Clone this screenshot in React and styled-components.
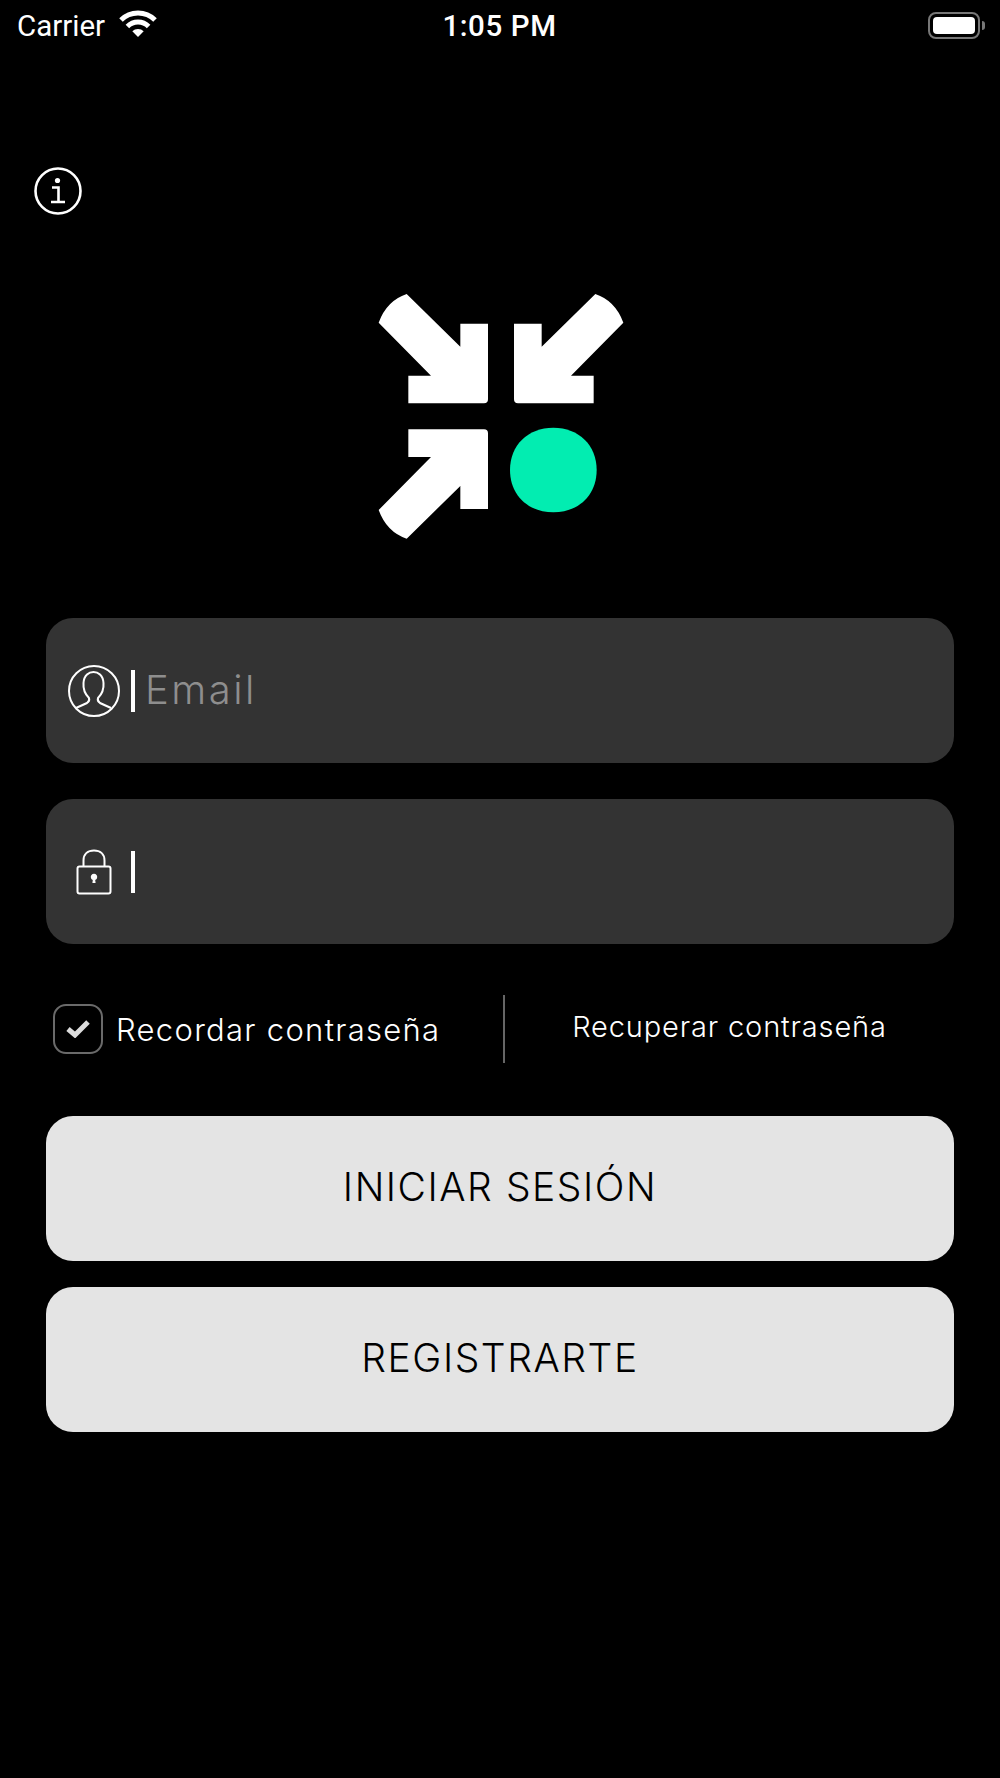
import styled, { createGlobalStyle } from "styled-components";

const GlobalStyle = createGlobalStyle`
    html, body {
        margin: 0;
        padding: 0;
        background-color: #000;
    }
`

const App = () => {
    return (
        <>
            <GlobalStyle />
            <Main>
                <StatusBar>
                    <StatusLeft>
                        <span>Carrier</span>
                        <WifiIcon />
                    </StatusLeft>
                    <Time>1:05 PM</Time>
                    <StatusRight>
                        <Battery><BatteryFill /></Battery>
                        <BatteryNub />
                    </StatusRight>
                </StatusBar>

                <InfoIcon />
                <Logo />

                <Form>
                    <Field>
                        <IconSlot><UserIcon /></IconSlot>
                        <Caret />
                        <Placeholder>Email</Placeholder>
                    </Field>
                    <Field>
                        <IconSlot><LockIcon /></IconSlot>
                        <Caret />
                    </Field>

                    <Options>
                        <Remember>
                            <CheckBox><CheckIcon /></CheckBox>
                            <RememberText>Recordar contraseña</RememberText>
                        </Remember>
                        <Divider />
                        <Recover>Recuperar contraseña</Recover>
                    </Options>

                    <Buttons>
                        <Button>INICIAR SESIÓN</Button>
                        <Button>REGISTRARTE</Button>
                    </Buttons>
                </Form>
            </Main>
        </>
    );
}

export default App;


const WifiIcon = () => (
    <WifiSvg viewBox="0 0 38 28" width="38" height="28">
        <path d="M2 10 A24 24 0 0 1 36 10" fill="none" stroke="#fff" strokeWidth="5" />
        <path d="M8.4 16.4 A15 15 0 0 1 29.6 16.4" fill="none" stroke="#fff" strokeWidth="5" />
        <path d="M19 27 L13.3 21.3 A8 8 0 0 1 24.7 21.3 Z" fill="#fff" />
    </WifiSvg>
)

const InfoIcon = () => (
    <InfoSvg viewBox="0 0 48 48" width="48" height="48">
        <circle cx="24" cy="24" r="22.5" fill="none" stroke="#fff" strokeWidth="2.6" />
        <circle cx="23.5" cy="13.5" r="2.6" fill="#fff" />
        <path d="M18 20.5 H24.5 V35 M17 35 H31" fill="none" stroke="#fff" strokeWidth="2.6" />
    </InfoSvg>
)

const arrow = "M140 42 L301 200 V131 H384 V358 Q384 370 372 370 H145 V287 H213 L56 128 Q80 62 140 42 Z"

const Logo = () => (
    <LogoSvg viewBox="0 0 840 810" width="280" height="270">
        <path d={arrow} fill="#fff" />
        <path d={arrow} fill="#fff" transform="translate(846 0) scale(-1 1)" />
        <path d={arrow} fill="#fff" transform="translate(0 818) scale(1 -1)" />
        <path
            d="M580 443 C657 443 710 496 710 570 C710 644 657 697 580 697 C503 697 450 644 450 570 C450 496 503 443 580 443 Z"
            fill="#02edb1"
        />
    </LogoSvg>
)

const UserIcon = () => (
    <svg viewBox="0 0 52 52" width="52" height="52" fill="none" stroke="#fff" strokeWidth="2">
        <circle cx="26" cy="26" r="25" />
        <path d="M8 43 L19 38 Q22 36 21 33 C17 29 15 24 15.5 18 C16 10 21 7 25.5 7 C30 7 35 10 35.5 18 C36 24 34 29 30 33 Q29 36 32 38 L43 43" />
    </svg>
)

const LockIcon = () => (
    <svg viewBox="0 0 36 46" width="36" height="46" fill="none" stroke="#fff" strokeWidth="2">
        <rect x="1.5" y="17.5" width="33" height="27" rx="2" />
        <path d="M7.5 17.5 V11.5 C7.5 5 12 1.5 18 1.5 C24 1.5 28.5 5 28.5 11.5 V17.5" />
        <path d="M16.4 34 L16.8 31 A3.2 3.2 0 1 1 19.2 31 L19.6 34 Z" fill="#fff" stroke="none" />
    </svg>
)

const CheckIcon = () => (
    <svg viewBox="0 0 24 18" width="24" height="18" fill="none" stroke="#dcdcdc" strokeWidth="5">
        <path d="M2 9 L9 15 L22 2" />
    </svg>
)


const Main = styled.main`
    width: 1000px;
    height: 1778px;
    overflow: hidden;
    background-color: #000;
    color: #fff;
    font-family: "Inter", "Liberation Sans", sans-serif;
`

const StatusBar = styled.header`
    display: grid;
    grid-template-columns: 1fr auto 1fr;
    align-items: center;
    box-sizing: border-box;
    height: 50px;
    padding: 1px 15px 0 17px;
    font-family: "Roboto", "Liberation Sans", sans-serif;
    font-size: 29.5px;
`

const StatusLeft = styled.div`
    display: flex;
    align-items: center;
    gap: 14px;
`

const WifiSvg = styled.svg`
    display: block;
    margin-top: -4px;
`

const Time = styled.div`
    font-weight: 500;
    letter-spacing: 0.6px;
    margin-left: -3px;
`

const StatusRight = styled.div`
    display: flex;
    align-items: center;
    justify-content: flex-end;
    gap: 2px;
`

const Battery = styled.div`
    box-sizing: border-box;
    width: 52px;
    height: 27px;
    padding: 3px;
    border: 2px solid #777;
    border-radius: 8px;
`

const BatteryFill = styled.div`
    height: 100%;
    background-color: #fff;
    border-radius: 4px;
`

const BatteryNub = styled.div`
    width: 3px;
    height: 9px;
    background-color: #777;
    border-radius: 0 3px 3px 0;
`

const InfoSvg = styled.svg`
    display: block;
    margin: 117px 0 0 34px;
`

const LogoSvg = styled.svg`
    display: block;
    margin: 65px auto 68px;
`

const Form = styled.div`
    display: flex;
    flex-direction: column;
    padding: 0 46px;
`

const Field = styled.div`
    display: flex;
    align-items: center;
    height: 145px;
    margin-bottom: 36px;
    padding-left: 22px;
    box-sizing: border-box;
    background-color: #333;
    border-radius: 27px;
    &:nth-child(2) {
        margin-bottom: 0;
    }
`

const IconSlot = styled.div`
    display: flex;
    align-items: center;
    justify-content: center;
    width: 52px;
    height: 52px;
`

const Caret = styled.div`
    width: 4px;
    height: 42px;
    margin-left: 11px;
    background-color: #fff;
`

const Placeholder = styled.span`
    margin-left: 10px;
    margin-top: -2px;
    font-size: 40px;
    font-weight: 300;
    letter-spacing: 2.5px;
    color: #8e8e8e;
`

const Options = styled.div`
    display: flex;
    align-items: center;
    height: 68px;
    margin: 51px 0 53px;
    padding-left: 7px;
`

const Remember = styled.div`
    display: flex;
    align-items: center;
    gap: 13px;
    width: 450px;
`

const CheckBox = styled.div`
    display: flex;
    align-items: center;
    justify-content: center;
    box-sizing: border-box;
    width: 50px;
    height: 50px;
    border: 2px solid #6a6a6a;
    border-radius: 13px;
`

const RememberText = styled.span`
    font-size: 31px;
    font-weight: 300;
    letter-spacing: 1.3px;
    white-space: nowrap;
`

const Divider = styled.div`
    width: 2px;
    height: 68px;
    background-color: #666;
`

const Recover = styled.div`
    flex: 1;
    margin-top: -5px;
    font-size: 29px;
    font-weight: 300;
    letter-spacing: 0.85px;
    text-align: center;
    white-space: nowrap;
`

const Buttons = styled.div`
    display: flex;
    flex-direction: column;
    gap: 26px;
`

const Button = styled.button`
    display: flex;
    align-items: center;
    justify-content: center;
    height: 145px;
    padding: 0 0 5px;
    border: none;
    background-color: #e4e4e4;
    border-radius: 27px;
    color: #000;
    font-family: inherit;
    font-size: 39px;
    font-weight: 300;
    letter-spacing: 1.55px;
    white-space: nowrap;
`
